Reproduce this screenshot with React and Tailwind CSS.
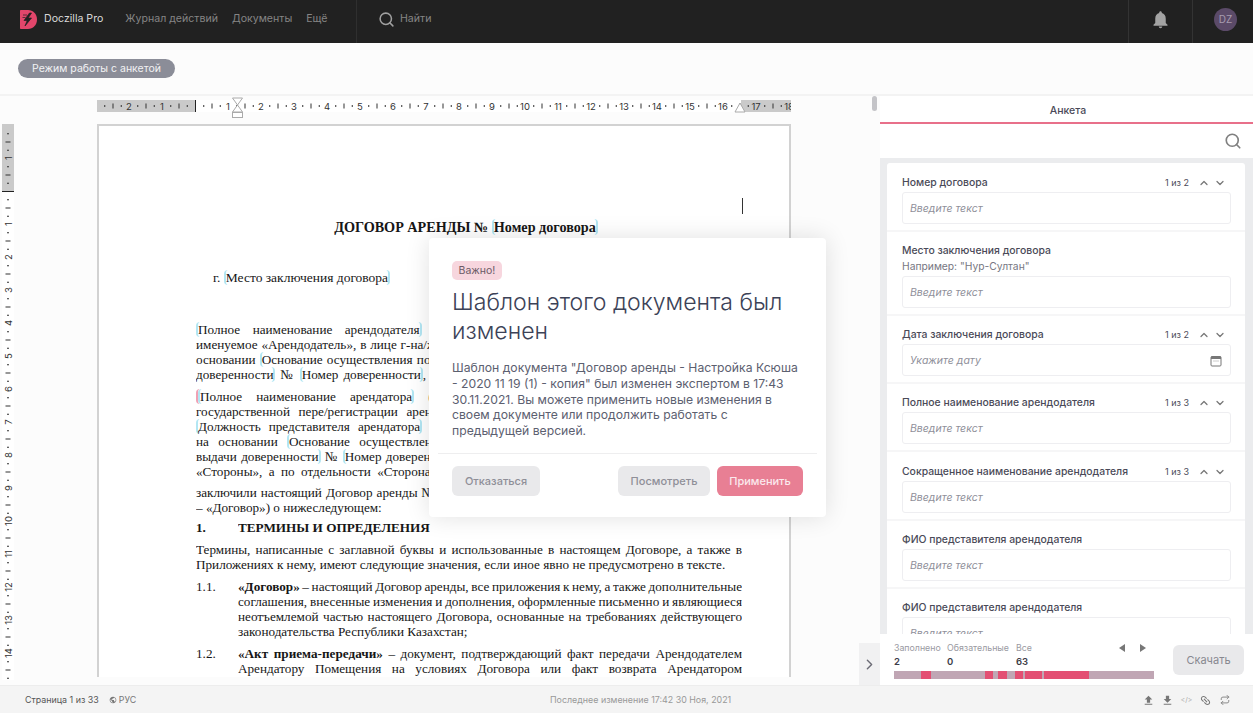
import React from "react";
import { Search, ChevronUp, ChevronDown, ChevronRight } from "lucide-react";
import { MdNotifications, MdFileUpload, MdFileDownload, MdLink, MdPublic } from "react-icons/md";
import { FiRepeat } from "react-icons/fi";

const ORIGIN_X = 98;
const ORIGIN_Y = 67;
const CM = 33;

const HorizontalRuler = () => {
  const marks = [];
  for (let i = -3; i <= 18; i++) {
    const x = ORIGIN_X + i * CM;
    if (i !== 0 && x > 3) {
      marks.push(
        <text key={`n${i}`} x={x} y={9.500} fontSize="9.500" textAnchor="middle" fill="#333" fontFamily="Inter, sans-serif">
          {Math.abs(i)}
        </text>
      );
    }
    [0.25, 0.5, 0.75].forEach((f) => {
      const tx = x + f * CM;
      if (tx > 0 && tx < 694) {
        const long = f === 0.5;
        marks.push(<rect key={`t${i}${f}`} x={tx} y={long ? 3.5 : 5} width="1" height={long ? 5 : 2} fill="#333" />);
      }
    });
  }
  return (
    <svg width="694" height="24" className="block">
      <rect x="0" y="4" width="694" height="12" fill="#fff" />
      <rect x="0" y="4" width="98" height="12" fill="#cacaca" />
      <rect x="644" y="4" width="50" height="12" fill="#cacaca" />
      <g transform="translate(0 4)">{marks}</g>
      <rect x="98" y="4" width="1" height="12" fill="#222" />
      <path d="M135.500 2h10l-5 7z M140.500 9l5 7h-10z" fill="#fff" stroke="#aaa" />
      <rect x="135.500" y="16.500" width="10" height="5" fill="#fff" stroke="#aaa" />
      <path d="M643 7l5 9h-10z" fill="#fff" stroke="#aaa" />
    </svg>
  );
};

const VerticalRuler = () => {
  const marks = [];
  for (let i = -2; i <= 15; i++) {
    const y = ORIGIN_Y + i * CM;
    if (i !== 0 && y > 5 && y < 548) {
      marks.push(
        <text key={`n${i}`} x="0" y="0" fontSize="9.500" textAnchor="middle" fill="#333" fontFamily="Inter, sans-serif" transform={`translate(9.500 ${y}) rotate(-90)`}>
          {Math.abs(i)}
        </text>
      );
    }
    [0.25, 0.5, 0.75].forEach((f) => {
      const ty = y + f * CM;
      if (ty > 0) {
        const long = f === 0.5;
        marks.push(<rect key={`t${i}${f}`} x={long ? 3.5 : 5} y={ty} width={long ? 5 : 2} height="1" fill="#333" />);
      }
    });
  }
  return (
    <svg width="12" height="556" className="block">
      <rect width="12" height="556" fill="#fff" />
      <rect width="12" height="67" fill="#cacaca" />
      {marks}
      <rect x="0" y="67" width="12" height="1" fill="#222" />
    </svg>
  );
};

const Logo = () => (
  <svg width="17" height="19" viewBox="0 0 17 19" className="block">
    <path d="M1 0h7c5 0 9 4 9 9.500S13 19 8 19H1c-.6 0-1-.4-1-1V1c0-.6.4-1 1-1z" fill="#e2466b" />
    <path d="M9.500 3L4 10.500h3.200L5 16l6.500-8H8.200l3.300-5z M3 5h4M2.500 7.500h3" fill="#212121" stroke="#212121" strokeWidth="0.7" />
  </svg>
);

const CalendarIcon = () => (
  <svg width="12" height="12" viewBox="0 0 12 12" className="mr-[1px] block">
    <rect x="1" y="1.500" width="10" height="9.500" rx="1" fill="none" stroke="#777" />
    <rect x="1" y="1.500" width="10" height="2.500" fill="#777" />
    <path d="M3.500 6h1M5.500 6h1M7.500 6h1" stroke="#999" />
  </svg>
);

// side: which of the field's brackets fall on this line
const F = ({ children, side = "both" }) => {
  const cls = {
    both: "border-x-2 rounded-[4px]",
    open: "border-l-2 rounded-l-[4px]",
    close: "border-r-2 rounded-r-[4px]",
  }[side];
  return <span className={`border-[#b2e6f3] ${cls}`}>{children}</span>;
};

const Line = ({ children, last, className = "" }) => (
  <div className={`h-[15px] leading-[15px] overflow-hidden ${last ? "" : "text-justify [text-align-last:justify]"} ${className}`}>{children}</div>
);

const Item = ({ num, mt, children }) => (
  <div className={`flex ${mt}`}>
    <div className="w-[42px] shrink-0 leading-[15px]">{num}</div>
    <div className="flex-1 min-w-0">{children}</div>
  </div>
);

const Document = () => (
  <div className="w-[694px] border-2 border-b-0 border-[#d2d2d2] bg-white pt-[94px] pl-[97px] pr-[47px] h-[553px] overflow-hidden font-['Liberation_Serif',serif] text-[13.200px] text-[#161616] relative">
    <div className="absolute left-[643px] top-[72px] w-px h-[16px] bg-[#333]"></div>
    <div className="text-center font-bold text-[14.200px] leading-[15px] mr-[6px]">
      ДОГОВОР АРЕНДЫ № <F>Номер договора</F>
    </div>
    <div className="mt-[35px] ml-[17px] leading-[15px] text-[13.500px]">
      г. <F>Место заключения договора</F>
    </div>
    <div className="mt-[37px]">
      <Line><F>Полное наименование арендодателя</F> (БИН/ИИН Номер идентификации арендодателя),</Line>
      <Line>именуемое «Арендодатель», в лице г-на/ж-жи ФИО представителя арендодателя, действующего</Line>
      <Line>основании <F side="open">Основание осуществления полномочий представителя арендодателя от Дата выдачи</F></Line>
      <Line><F side="close">доверенности</F> № <F>Номер доверенности</F>, с одной стороны, и настоящий договор заключили на</Line>
    </div>
    <div className="mt-[7px]">
      <Line><span className="border-l-2 border-[#f0a0b4] rounded-l-[4px]"><F>Полное наименование арендатора</F></span> (БИН/ИИН Номер идентификации, свидетельство</Line>
      <Line>государственной пере/регистрации арендатора Номер и Дата), именуемое «Арендатор», в</Line>
      <Line><F>Должность представителя арендатора</F> г-на ФИО представителя арендатора, действующего</Line>
      <Line>на основании <F side="open">Основание осуществления полномочий представителя арендатора от Дата</F></Line>
      <Line>выдачи <F side="close">доверенности</F> № <F>Номер доверенности</F>, с другой стороны, далее совместно именуемые</Line>
      <Line>«Стороны», а по отдельности «Сторона» или как указано в настоящем Договоре ниже, для</Line>
    </div>
    <div className="mt-[6px]">
      <Line>заключили настоящий Договор аренды № Номер договора (далее по тексту настоящего раздела</Line>
      <Line last>– «Договор») о нижеследующем:</Line>
    </div>
    <Item num={<b>1.</b>} mt="mt-[5px]">
      <Line last><b>ТЕРМИНЫ И ОПРЕДЕЛЕНИЯ</b></Line>
    </Item>
    <div className="mt-[7px]">
      <Line>Термины, написанные с заглавной буквы и использованные в настоящем Договоре, а также в</Line>
      <Line last>Приложениях к нему, имеют следующие значения, если иное явно не предусмотрено в тексте.</Line>
    </div>
    <Item num="1.1." mt="mt-[7px]">
      <Line className="[word-spacing:-1.500px]"><b>«Договор»</b> – настоящий Договор аренды, все приложения к нему, а также дополнительные</Line>
      <Line className="[word-spacing:-1.500px]">соглашения, внесенные изменения и дополнения, оформленные письменно и являющиеся</Line>
      <Line>неотъемлемой частью настоящего Договора, основанные на требованиях действующего</Line>
      <Line last>законодательства Республики Казахстан;</Line>
    </Item>
    <Item num="1.2." mt="mt-[7px]">
      <Line><b>«Акт приема-передачи»</b> – документ, подтверждающий факт передачи Арендодателем</Line>
      <Line>Арендатору Помещения на условиях Договора или факт возврата Арендатором</Line>
    </Item>
  </div>
);

const FORM_FIELDS = [
  { label: "Номер договора", count: "1 из 2", h: "h-[69px]" },
  { label: "Место заключения договора", hint: 'Например: "Нур-Султан"', h: "h-[84px]" },
  { label: "Дата заключения договора", count: "1 из 2", date: true, h: "h-[68px]" },
  { label: "Полное наименование арендодателя", count: "1 из 3", h: "h-[68px]" },
  { label: "Сокращенное наименование арендодателя", count: "1 из 3", h: "h-[69px]" },
  { label: "ФИО представителя арендодателя", h: "h-[68px]" },
  { label: "ФИО представителя арендодателя", h: "h-[68px]" },
];

const FormField = ({ field }) => (
  <div className={`${field.h} shrink-0 pl-[15px] pr-[14px] border-b-2 border-[#f6f6f7] flex flex-col justify-end pb-[6px]`}>
    <div className="flex items-center h-[16px] pt-[2px] text-[10.400px] font-medium text-[#4a4a58]">
      <span className="flex-1">{field.label}</span>
      {field.count && (
        <>
          <span className="text-[9px] font-normal mr-[9px]">{field.count}</span>
          <ChevronUp size={12} strokeWidth={2.500} className="mr-[4px] text-[#777]" />
          <ChevronDown size={12} strokeWidth={2.500} className="text-[#777] mr-[5px]" />
        </>
      )}
    </div>
    {field.hint && <div className="text-[10.300px] text-[#777782] h-[16px] leading-[16px]">{field.hint}</div>}
    <div className="mt-[2px] h-[32px] shrink-0 border border-[#eeeef1] rounded-[3px] flex items-center pt-px px-[7px] text-[10.500px] italic text-[#8f8f9a]">
      <span className="flex-1">{field.date ? "Укажите дату" : "Введите текст"}</span>
      {field.date && <CalendarIcon />}
    </div>
  </div>
);

const SEGMENTS = [
  { left: 27, width: 10 },
  { left: 91, width: 8 },
  { left: 104, width: 9 },
  { left: 121, width: 8 },
  { left: 131, width: 17 },
  { left: 150, width: 45 },
];

const Stat = ({ label, value, w }) => (
  <div className={w}>
    <div className="text-[8.800px] leading-[12px] text-[#9a9aa2]">{label}</div>
    <div className="text-[9.500px] leading-[14px] font-semibold text-[#3c3c48] mt-[1px]">{value}</div>
  </div>
);

const RightPanel = () => (
  <div className="w-[373px] h-full flex flex-col bg-white">
    <div className="h-[28px] shrink-0 border-b-2 border-[#e8708a] flex items-center justify-center pl-[3px] pt-[4px] text-[10.500px] text-[#4a4a58] font-medium">
      Анкета
    </div>
    <div className="h-[34px] shrink-0 flex items-center justify-end pr-[11px]">
      <Search size={18} strokeWidth={2.200} className="text-[#808080]" />
    </div>
    <div className="flex-1 min-h-0 bg-[#ebecee] pl-[7px] pr-[8px] pt-[5px] overflow-hidden">
      <div className="bg-white rounded-[3px] flex flex-col">
        {FORM_FIELDS.map((f, i) => (
          <FormField key={i} field={f} />
        ))}
      </div>
    </div>
    <div className="h-[51px] shrink-0 bg-white flex pl-[14px] pr-[9px]">
      <div className="w-[260px] pt-[8px]">
        <div className="flex items-start">
          <Stat label="Заполнено" value="2" w="w-[53px]" />
          <Stat label="Обязательные" value="0" w="w-[69px]" />
          <Stat label="Все" value="63" w="w-[100px]" />
          <div className="flex gap-[15px] pt-[2px] pl-[3px]">
            <svg width="6" height="8" viewBox="0 0 6 8"><path d="M6 0v8L0 4z" fill="#777" /></svg>
            <svg width="6" height="8" viewBox="0 0 6 8"><path d="M0 0v8l6-4z" fill="#777" /></svg>
          </div>
        </div>
        <div className="relative h-[8px] mt-[2px] bg-[#c0a6b4]">
          {SEGMENTS.map((s) => (
            <div key={s.left} className="absolute top-0 h-full bg-[#e34f73]" style={{ left: s.left, width: s.width }}></div>
          ))}
        </div>
      </div>
      <button className="ml-[19px] mt-[11px] w-[71px] h-[30px] rounded-[6px] bg-[#e9e9eb] text-[11px] text-[#888890]">Скачать</button>
    </div>
  </div>
);

const Modal = () => (
  <div className="absolute left-[429px] top-[142px] w-[397px] h-[279px] bg-white rounded-[4px] shadow-[0_0_24px_rgba(0,0,0,0.12)] pt-[23px] flex flex-col">
    <div className="px-[23px]">
      <div className="flex w-[50px] items-center justify-center h-[19px] rounded-[5px] bg-[#f7d6de] text-[10.500px] text-[#6b5a66]">Важно!</div>
      <h1 className="mt-[8px] text-[23.100px] leading-[29px] font-light text-[#3c4257]">Шаблон этого документа был изменен</h1>
      <p className="mt-[14px] text-[12.200px] leading-[15.750px] text-[#5c6070]">
        Шаблон документа "Договор аренды - Настройка Ксюша - 2020 11 19 (1) - копия" был изменен экспертом в 17:43 30.11.2021. Вы можете применить новые изменения в своем документе или продолжить работать с предыдущей версией.
      </p>
    </div>
    <div className="mx-[9px] mt-[14px] border-t border-[#eeeeef]"></div>
    <div className="flex px-[23px] mt-[12px] text-[11px] font-medium">
      <button className="w-[88px] h-[30px] rounded-[6px] bg-[#e9e9eb] text-[#8f8f98]">Отказаться</button>
      <button className="ml-auto w-[92px] h-[30px] rounded-[6px] bg-[#e9e9eb] text-[#8f8f98]">Посмотреть</button>
      <button className="ml-[7px] w-[86px] h-[30px] rounded-[6px] bg-[#e87f94] text-[#fbe9ed]">Применить</button>
    </div>
  </div>
);

const FooterIcon = ({ children }) => <div className="w-[19px] flex items-center justify-center">{children}</div>;

export default function App() {
  return (
    <div className="w-[1253px] h-[713px] flex flex-col overflow-hidden bg-[#fcfcfc] font-['Inter',sans-serif]">
      <header className="h-[43px] shrink-0 bg-[#212121] flex items-stretch text-[10.600px]">
        <div className="w-[357px] flex items-center pl-[20px] pb-[5px] border-r border-[#2f2f2f]">
          <Logo />
          <span className="ml-[7px] text-[#d8d8d8]">Doczilla Pro</span>
          <span className="ml-[22px] text-[#858585]">Журнал действий</span>
          <span className="ml-[14px] text-[#858585]">Документы</span>
          <span className="ml-[14px] text-[#858585]">Ещё</span>
        </div>
        <div className="flex-1 flex items-center pl-[21px] pb-[5px] text-[#858585]">
          <Search size={17} strokeWidth={2.200} className="text-[#a0a0a0]" />
          <span className="ml-[5px]">Найти</span>
        </div>
        <div className="w-[65px] flex items-center justify-center pb-[5px] border-x border-[#333]">
          <MdNotifications size={21} className="text-[#a3a3a3]" />
        </div>
        <div className="w-[60px] flex items-center pl-[21px] pb-[5px]">
          <div className="w-[23px] h-[23px] rounded-full bg-[#5b4a68] flex items-center justify-center text-[10px] text-[#a89cb0]">DZ</div>
        </div>
      </header>

      <div className="h-[53px] shrink-0 flex items-center pl-[18px] border-b-2 border-[#f3f3f3]">
        <div className="h-[19px] w-[157px] rounded-full bg-[#8b8d98] flex items-center justify-center text-[10.500px] text-[#f2f2f4]">
          Режим работы с анкетой
        </div>
      </div>

      <main className="h-[589px] shrink-0 flex relative">
        <div className="w-[880px] shrink-0 flex flex-col">
          <div className="h-[28px] pl-[97px]">
            <HorizontalRuler />
          </div>
          <div className="flex pl-[2px]">
            <div className="w-[95px] shrink-0">
              <VerticalRuler />
            </div>
            <Document />
          </div>
        </div>
        <RightPanel />
        <div className="absolute left-[872px] top-[0px] w-[5px] h-[15px] rounded-full bg-[#c4c4c8]"></div>
        <div className="absolute left-[859px] bottom-0 w-[21px] h-[42px] bg-[#f1f1f2] flex items-center justify-center">
          <ChevronRight size={17} className="text-[#6c6c76]" />
        </div>
        <Modal />
      </main>

      <footer className="flex-1 bg-[#f4f4f4] border-t border-[#ededed] flex items-center pt-px text-[8.900px] relative">
        <span className="ml-[25px] text-[#555]">Страница 1 из 33</span>
        <MdPublic size={8} className="ml-[10px] text-[#777]" />
        <span className="ml-[2px] text-[#777]">РУС</span>
        <span className="absolute left-[550px] text-[#999]">Последнее изменение 17:42 30 Ноя, 2021</span>
        <div className="ml-auto mr-[19px] flex items-center text-[#777]">
          <FooterIcon><MdFileUpload size={13} /></FooterIcon>
          <FooterIcon><MdFileDownload size={13} /></FooterIcon>
          <FooterIcon><span className="text-[7px] text-[#aaa]">&lt;/&gt;</span></FooterIcon>
          <FooterIcon><MdLink size={13} className="rotate-45" /></FooterIcon>
          <FooterIcon><FiRepeat size={10} /></FooterIcon>
        </div>
      </footer>
    </div>
  );
}
